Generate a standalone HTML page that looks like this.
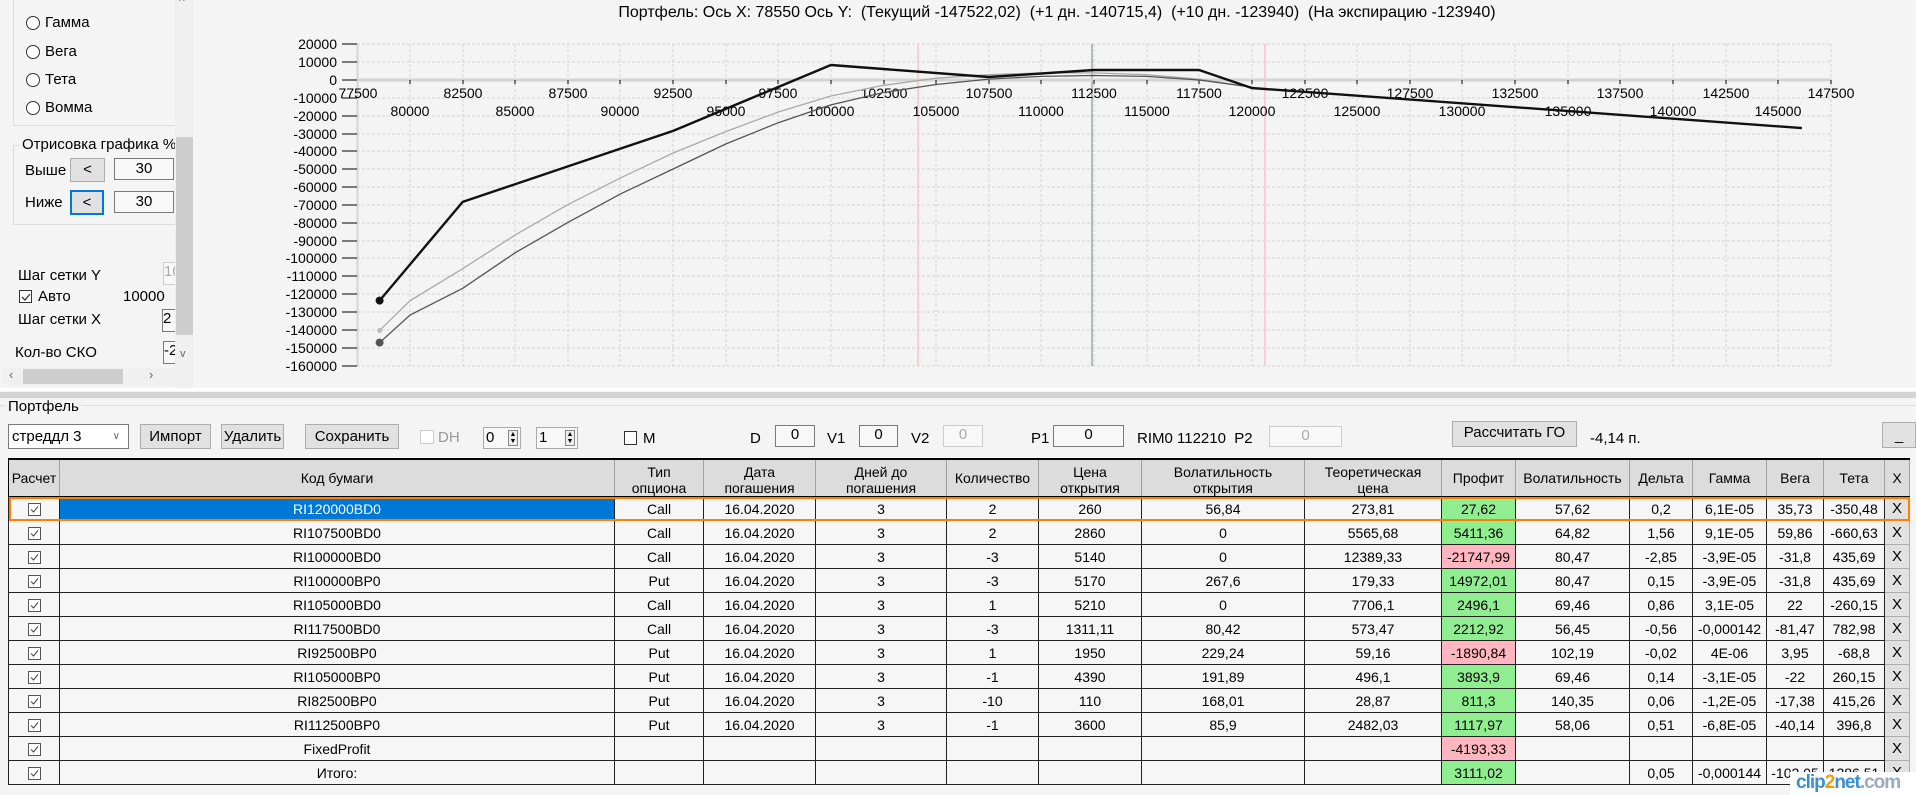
<!DOCTYPE html>
<html><head><meta charset="utf-8"><style>
*{box-sizing:border-box;margin:0;padding:0}
body{width:1916px;height:795px;overflow:hidden;background:#f4f4f4;font-family:"Liberation Sans",sans-serif;color:#000;position:relative}
.a{position:absolute;white-space:nowrap}
.l{font-size:15px;line-height:18px}
.btn{position:absolute;background:#e1e1e1;border:1px solid #adadad;font-size:15px;text-align:center}
.tb{position:absolute;background:#f8f8f8;border:1px solid #7a7a7a;font-size:15px;text-align:center}
.rad{position:absolute;width:14px;height:14px;border:1px solid #333;border-radius:50%;background:#fff}
table{position:absolute;left:8px;top:458px;border-collapse:collapse;table-layout:fixed;font-size:14px;border-top:2px solid #000;border-left:1px solid #000}
th{background:#dcdcdc;font-weight:normal;height:36px;border-right:1px solid #a0a0a0;border-bottom:1px solid #000;line-height:16px;overflow:hidden;padding-top:4px;vertical-align:top}
td{height:24px;border:1px solid #222;text-align:center;background:#f6f6f6;overflow:hidden;white-space:nowrap;padding:0}
td.g{background:#90ee90}td.r{background:#ffb6c1}
td.x{background:#e1e1e1;border:1px solid #adadad;font-size:15px}
td.sel{background:#0078d7;color:#fff}
.cb{display:inline-block;width:13px;height:13px;border:1px solid #555;background:#fff;vertical-align:middle;position:relative}
.cb svg{position:absolute;left:0;top:0}
</style></head><body>

<!-- left panel -->
<div class="a" style="left:0;top:0;width:193px;height:388px;background:#f4f4f4"></div>
<div class="a" style="left:13px;top:-5px;width:165px;height:131px;border:1px solid #dcdcdc;border-right:none"></div>
<div class="rad" style="left:26px;top:16px"></div><div class="a l" style="left:45px;top:14px">Гамма</div>
<div class="rad" style="left:26px;top:45px"></div><div class="a l" style="left:45px;top:43px">Вега</div>
<div class="rad" style="left:26px;top:73px"></div><div class="a l" style="left:45px;top:71px">Тета</div>
<div class="rad" style="left:26px;top:101px"></div><div class="a l" style="left:45px;top:99px">Вомма</div>
<div class="a" style="left:13px;top:145px;width:165px;height:80px;border:1px solid #dcdcdc;border-right:none"></div>
<div class="a l" style="left:20px;top:136px;background:#f4f4f4;padding:0 2px">Отрисовка графика %</div>
<div class="a l" style="left:25px;top:162px">Выше</div>
<div class="btn" style="left:70px;top:158px;width:35px;height:24px;line-height:22px">&lt;</div>
<div class="tb" style="left:114px;top:158px;width:60px;height:22px;line-height:20px">30</div>
<div class="a l" style="left:25px;top:194px">Ниже</div>
<div class="btn" style="left:70px;top:190px;width:34px;height:25px;line-height:21px;border:2px solid #0078d7">&lt;</div>
<div class="tb" style="left:114px;top:191px;width:60px;height:22px;line-height:20px">30</div>
<div class="a l" style="left:18px;top:267px">Шаг сетки Y</div>
<div class="tb" style="left:163px;top:262px;width:14px;height:23px;color:#aaa;border-color:#ccc;overflow:hidden;text-align:left">10</div>
<div class="a" style="left:19px;top:290px;width:13px;height:13px;border:1px solid #333;background:#fff"><svg width="13" height="13"><path d="M2 6 L5 9 L10 3" stroke="#333" stroke-width="1.3" fill="none"/></svg></div>
<div class="a l" style="left:38px;top:288px">Авто</div>
<div class="a l" style="left:123px;top:288px">10000</div>
<div class="a l" style="left:18px;top:311px">Шаг сетки X</div>
<div class="tb" style="left:162px;top:309px;width:15px;height:23px;overflow:hidden;text-align:left">2</div>
<div class="a l" style="left:15px;top:344px">Кол-во СКО</div>
<div class="tb" style="left:163px;top:341px;width:14px;height:23px;overflow:hidden;text-align:left">-2</div>
<div class="a" style="left:175px;top:0;width:18px;height:388px;background:#f0f0f0"></div>
<div class="a" style="left:176px;top:137px;width:17px;height:198px;background:#cdcdcd"></div>
<div class="a" style="left:179px;top:-6px;font-size:12px;color:#666">^</div>
<div class="a" style="left:180px;top:348px;font-size:11px;color:#666">v</div>
<div class="a" style="left:3px;top:368px;width:172px;height:17px;background:#f0f0f0"></div>
<div class="a" style="left:23px;top:369px;width:100px;height:15px;background:#cdcdcd"></div>
<div class="a" style="left:9px;top:367px;font-size:13px;color:#666">‹</div>
<div class="a" style="left:149px;top:367px;font-size:13px;color:#666">›</div>

<!-- chart -->
<div class="a" style="left:614px;top:3px;width:886px;text-align:center;font-size:16px;line-height:20px">Портфель: Ось X: 78550 Ось Y:&nbsp; (Текущий -147522,02)&nbsp; (+1 дн. -140715,4)&nbsp; (+10 дн. -123940)&nbsp; (На экспирацию -123940)</div>
<svg class="a" style="left:0;top:0" width="1916" height="388">
<g stroke="#d3d3d3" stroke-dasharray="3,2" stroke-width="1">
<path d="M357 44H1831M357 62H1831M357 98H1831M357 116H1831M357 134H1831M357 151H1831M357 169H1831M357 187H1831M357 205H1831M357 223H1831M357 241H1831M357 258H1831M357 276H1831M357 294H1831M357 312H1831M357 330H1831M357 348H1831M357 366H1831"/>
<path d="M410 44V366M463 44V366M515 44V366M568 44V366M620 44V366M673 44V366M726 44V366M778 44V366M831 44V366M884 44V366M936 44V366M989 44V366M1041 44V366M1094 44V366M1147 44V366M1199 44V366M1252 44V366M1305 44V366M1357 44V366M1410 44V366M1462 44V366M1515 44V366M1568 44V366M1620 44V366M1673 44V366M1726 44V366M1778 44V366M1831 44V366"/>
</g>
<path d="M918 44V366M1265 44V366" stroke="#ffc0cb" stroke-width="1.5"/>
<path d="M1092 44V366" stroke="#8890a0" stroke-width="1.2"/>
<path d="M357 80H1831" stroke="#d4d4d4" stroke-width="3"/>
<path d="M357.5 44V366" stroke="#d4d4d4" stroke-width="2"/>
<g stroke="#000" stroke-width="1"><path d="M342 44H357M342 62H357M342 80H357M342 98H357M342 116H357M342 134H357M342 151H357M342 169H357M342 187H357M342 205H357M342 223H357M342 241H357M342 258H357M342 276H357M342 294H357M342 312H357M342 330H357M342 348H357M342 366H357"/>
<path d="M410 80v4M463 80v4M515 80v4M568 80v4M620 80v4M673 80v4M726 80v4M778 80v4M831 80v4M884 80v4M936 80v4M989 80v4M1041 80v4M1094 80v4M1147 80v4M1199 80v4M1252 80v4M1305 80v4M1357 80v4M1410 80v4M1462 80v4M1515 80v4M1568 80v4M1620 80v4M1673 80v4M1726 80v4M1778 80v4M1831 80v4"/></g>
<g font-family="Liberation Sans" font-size="14" text-anchor="end">
<text x="337" y="49">20000</text><text x="337" y="67">10000</text><text x="337" y="85">0</text><text x="337" y="103">-10000</text><text x="337" y="121">-20000</text><text x="337" y="139">-30000</text><text x="337" y="156">-40000</text><text x="337" y="174">-50000</text><text x="337" y="192">-60000</text><text x="337" y="210">-70000</text><text x="337" y="228">-80000</text><text x="337" y="246">-90000</text><text x="337" y="263">-100000</text><text x="337" y="281">-110000</text><text x="337" y="299">-120000</text><text x="337" y="317">-130000</text><text x="337" y="335">-140000</text><text x="337" y="353">-150000</text><text x="337" y="371">-160000</text>
</g>
<g font-family="Liberation Sans" font-size="14" text-anchor="middle">
<text x="358" y="98">77500</text><text x="463" y="98">82500</text><text x="568" y="98">87500</text><text x="673" y="98">92500</text><text x="778" y="98">97500</text><text x="884" y="98">102500</text><text x="989" y="98">107500</text><text x="1094" y="98">112500</text><text x="1199" y="98">117500</text><text x="1305" y="98">122500</text><text x="1410" y="98">127500</text><text x="1515" y="98">132500</text><text x="1620" y="98">137500</text><text x="1726" y="98">142500</text><text x="1831" y="98">147500</text>
<text x="410" y="116">80000</text><text x="515" y="116">85000</text><text x="620" y="116">90000</text><text x="726" y="116">95000</text><text x="831" y="116">100000</text><text x="936" y="116">105000</text><text x="1041" y="116">110000</text><text x="1147" y="116">115000</text><text x="1252" y="116">120000</text><text x="1357" y="116">125000</text><text x="1462" y="116">130000</text><text x="1568" y="116">135000</text><text x="1673" y="116">140000</text><text x="1778" y="116">145000</text>
</g>
<polyline fill="none" stroke="#aaa" stroke-width="1.3" points="379.6,330.5 410.1,300.7 462.7,268.7 515.3,234.9 567.9,204.6 620.5,177.9 673.1,153 725.7,131.6 778.3,112 830.9,96 883.5,85.3 936.1,78.2 988.7,74.7 1041.3,72.9 1093.9,72.9 1146.5,74.7 1199.1,79.1 1251.7,87.1"/>
<polyline fill="none" stroke="#555" stroke-width="1.3" points="379.6,342.6 410.1,315 462.7,288.3 515.3,252.7 567.9,222.4 620.5,193.9 673.1,169 725.7,144 778.3,122.7 830.9,104.9 883.5,92.5 936.1,84.5 988.7,79.1 1041.3,76.4 1093.9,75.5 1146.5,76.4 1199.1,80 1251.7,87.1"/>
<polyline fill="none" stroke="#111" stroke-width="2.4" stroke-linejoin="round" points="379.6,300.6 462.7,201.9 673.1,130.9 830.9,65 988.7,77 1093.9,70 1199.1,70 1251.7,88 1801.9,128.1"/>
<circle cx="379.6" cy="300.6" r="4" fill="#111"/>
<circle cx="379.6" cy="342.6" r="4" fill="#555"/>
<circle cx="379.6" cy="330.5" r="2.5" fill="#bbb"/>
</svg>

<!-- splitter -->
<div class="a" style="left:0;top:388px;width:1916px;height:3px;background:#fff"></div>
<div class="a" style="left:0;top:392px;width:1916px;height:6px;background:#d3d3d3"></div>
<div class="a" style="left:0;top:405px;width:1916px;height:1px;background:#dcdcdc"></div>
<div class="a l" style="left:6px;top:398px;background:#f4f4f4;padding:0 2px">Портфель</div>

<!-- toolbar -->
<div class="a" style="left:8px;top:424px;width:121px;height:25px;background:#fff;border:1px solid #7a7a7a;font-size:15px;line-height:23px;padding-left:3px">стреддл 3<span style="position:absolute;right:8px;font-size:10px;color:#666">∨</span></div>
<div class="btn" style="left:140px;top:424px;width:71px;height:25px;line-height:23px">Импорт</div>
<div class="btn" style="left:221px;top:424px;width:63px;height:25px;line-height:23px">Удалить</div>
<div class="btn" style="left:305px;top:424px;width:94px;height:25px;line-height:23px">Сохранить</div>
<div class="a" style="left:420px;top:430px;width:14px;height:14px;border:1px solid #ccc;background:#fff"></div>
<div class="a l" style="left:438px;top:429px;color:#999">DH</div>
<div class="a" style="left:483px;top:427px;width:38px;height:22px;border:1px solid #aaa;background:#f8f8f8;font-size:15px;line-height:20px;padding-left:2px">0<span style="position:absolute;right:2px;top:2px;width:10px;height:16px;border:1px solid #888;font-size:7px;line-height:7px;text-align:center;background:#eee">▲<br>▼</span></div>
<div class="a" style="left:536px;top:427px;width:42px;height:22px;border:1px solid #aaa;background:#f8f8f8;font-size:15px;line-height:20px;padding-left:2px">1<span style="position:absolute;right:2px;top:2px;width:10px;height:16px;border:1px solid #888;font-size:7px;line-height:7px;text-align:center;background:#eee">▲<br>▼</span></div>
<div class="a" style="left:624px;top:431px;width:13px;height:14px;border:1px solid #333;background:#fff"></div>
<div class="a l" style="left:643px;top:430px">M</div>
<div class="a l" style="left:750px;top:430px">D</div>
<div class="tb" style="left:775px;top:425px;width:40px;height:22px;line-height:18px">0</div>
<div class="a l" style="left:827px;top:430px">V1</div>
<div class="tb" style="left:859px;top:425px;width:39px;height:22px;line-height:18px">0</div>
<div class="a l" style="left:911px;top:430px">V2</div>
<div class="tb" style="left:943px;top:425px;width:40px;height:22px;line-height:18px;color:#aaa;border-color:#ccc">0</div>
<div class="a l" style="left:1031px;top:430px">P1</div>
<div class="tb" style="left:1053px;top:425px;width:71px;height:22px;line-height:18px">0</div>
<div class="a l" style="left:1137px;top:430px">RIM0 112210&nbsp; P2</div>
<div class="tb" style="left:1269px;top:426px;width:73px;height:21px;line-height:18px;color:#aaa;border-color:#ccc">0</div>
<div class="btn" style="left:1452px;top:421px;width:125px;height:26px;line-height:22px">Рассчитать ГО</div>
<div class="a l" style="left:1590px;top:430px">-4,14 п.</div>
<div class="btn" style="left:1882px;top:422px;width:34px;height:26px;line-height:26px">_</div>

<!-- table -->
<table>
<colgroup><col style="width:51px"><col style="width:555px"><col style="width:89px"><col style="width:112px"><col style="width:131px"><col style="width:92px"><col style="width:103px"><col style="width:163px"><col style="width:137px"><col style="width:74px"><col style="width:114px"><col style="width:63px"><col style="width:74px"><col style="width:57px"><col style="width:61px"><col style="width:25px"></colgroup>
<tr><th style="padding-top:10px">Расчет</th><th style="padding-top:10px">Код бумаги</th><th>Тип<br>опциона</th><th>Дата<br>погашения</th><th>Дней до<br>погашения</th><th style="padding-top:10px">Количество</th><th>Цена<br>открытия</th><th>Волатильность<br>открытия</th><th>Теоретическая<br>цена</th><th style="padding-top:10px">Профит</th><th style="padding-top:10px">Волатильность</th><th style="padding-top:10px">Дельта</th><th style="padding-top:10px">Гамма</th><th style="padding-top:10px">Вега</th><th style="padding-top:10px">Тета</th><th style="padding-top:10px">X</th></tr>
<tr style="outline:2px solid #ff8000;outline-offset:-2px"><td><span class="cb"><svg width="11" height="11"><path d="M2 5.5L4.5 8L9 2.5" stroke="#444" fill="none"/></svg></span></td><td class="sel">RI120000BD0</td><td>Call</td><td>16.04.2020</td><td>3</td><td>2</td><td>260</td><td>56,84</td><td>273,81</td><td class="g">27,62</td><td>57,62</td><td>0,2</td><td>6,1E-05</td><td>35,73</td><td>-350,48</td><td class="x">X</td></tr>
<tr><td><span class="cb"><svg width="11" height="11"><path d="M2 5.5L4.5 8L9 2.5" stroke="#444" fill="none"/></svg></span></td><td>RI107500BD0</td><td>Call</td><td>16.04.2020</td><td>3</td><td>2</td><td>2860</td><td>0</td><td>5565,68</td><td class="g">5411,36</td><td>64,82</td><td>1,56</td><td>9,1E-05</td><td>59,86</td><td>-660,63</td><td class="x">X</td></tr>
<tr><td><span class="cb"><svg width="11" height="11"><path d="M2 5.5L4.5 8L9 2.5" stroke="#444" fill="none"/></svg></span></td><td>RI100000BD0</td><td>Call</td><td>16.04.2020</td><td>3</td><td>-3</td><td>5140</td><td>0</td><td>12389,33</td><td class="r">-21747,99</td><td>80,47</td><td>-2,85</td><td>-3,9E-05</td><td>-31,8</td><td>435,69</td><td class="x">X</td></tr>
<tr><td><span class="cb"><svg width="11" height="11"><path d="M2 5.5L4.5 8L9 2.5" stroke="#444" fill="none"/></svg></span></td><td>RI100000BP0</td><td>Put</td><td>16.04.2020</td><td>3</td><td>-3</td><td>5170</td><td>267,6</td><td>179,33</td><td class="g">14972,01</td><td>80,47</td><td>0,15</td><td>-3,9E-05</td><td>-31,8</td><td>435,69</td><td class="x">X</td></tr>
<tr><td><span class="cb"><svg width="11" height="11"><path d="M2 5.5L4.5 8L9 2.5" stroke="#444" fill="none"/></svg></span></td><td>RI105000BD0</td><td>Call</td><td>16.04.2020</td><td>3</td><td>1</td><td>5210</td><td>0</td><td>7706,1</td><td class="g">2496,1</td><td>69,46</td><td>0,86</td><td>3,1E-05</td><td>22</td><td>-260,15</td><td class="x">X</td></tr>
<tr><td><span class="cb"><svg width="11" height="11"><path d="M2 5.5L4.5 8L9 2.5" stroke="#444" fill="none"/></svg></span></td><td>RI117500BD0</td><td>Call</td><td>16.04.2020</td><td>3</td><td>-3</td><td>1311,11</td><td>80,42</td><td>573,47</td><td class="g">2212,92</td><td>56,45</td><td>-0,56</td><td>-0,000142</td><td>-81,47</td><td>782,98</td><td class="x">X</td></tr>
<tr><td><span class="cb"><svg width="11" height="11"><path d="M2 5.5L4.5 8L9 2.5" stroke="#444" fill="none"/></svg></span></td><td>RI92500BP0</td><td>Put</td><td>16.04.2020</td><td>3</td><td>1</td><td>1950</td><td>229,24</td><td>59,16</td><td class="r">-1890,84</td><td>102,19</td><td>-0,02</td><td>4E-06</td><td>3,95</td><td>-68,8</td><td class="x">X</td></tr>
<tr><td><span class="cb"><svg width="11" height="11"><path d="M2 5.5L4.5 8L9 2.5" stroke="#444" fill="none"/></svg></span></td><td>RI105000BP0</td><td>Put</td><td>16.04.2020</td><td>3</td><td>-1</td><td>4390</td><td>191,89</td><td>496,1</td><td class="g">3893,9</td><td>69,46</td><td>0,14</td><td>-3,1E-05</td><td>-22</td><td>260,15</td><td class="x">X</td></tr>
<tr><td><span class="cb"><svg width="11" height="11"><path d="M2 5.5L4.5 8L9 2.5" stroke="#444" fill="none"/></svg></span></td><td>RI82500BP0</td><td>Put</td><td>16.04.2020</td><td>3</td><td>-10</td><td>110</td><td>168,01</td><td>28,87</td><td class="g">811,3</td><td>140,35</td><td>0,06</td><td>-1,2E-05</td><td>-17,38</td><td>415,26</td><td class="x">X</td></tr>
<tr><td><span class="cb"><svg width="11" height="11"><path d="M2 5.5L4.5 8L9 2.5" stroke="#444" fill="none"/></svg></span></td><td>RI112500BP0</td><td>Put</td><td>16.04.2020</td><td>3</td><td>-1</td><td>3600</td><td>85,9</td><td>2482,03</td><td class="g">1117,97</td><td>58,06</td><td>0,51</td><td>-6,8E-05</td><td>-40,14</td><td>396,8</td><td class="x">X</td></tr>
<tr><td><span class="cb"><svg width="11" height="11"><path d="M2 5.5L4.5 8L9 2.5" stroke="#444" fill="none"/></svg></span></td><td>FixedProfit</td><td></td><td></td><td></td><td></td><td></td><td></td><td></td><td class="r">-4193,33</td><td></td><td></td><td></td><td></td><td></td><td class="x">X</td></tr>
<tr><td><span class="cb"><svg width="11" height="11"><path d="M2 5.5L4.5 8L9 2.5" stroke="#444" fill="none"/></svg></span></td><td>Итого:</td><td></td><td></td><td></td><td></td><td></td><td></td><td></td><td class="g">3111,02</td><td></td><td>0,05</td><td>-0,000144</td><td>-102,05</td><td>1286,51</td><td class="x">X</td></tr>
</table>

<!-- watermark -->
<div class="a" style="left:1790px;top:772px;width:126px;height:23px;background:#fff"></div>
<div class="a" style="left:1796px;top:772px;font-size:19px;line-height:22px;color:#3a8fd0;font-weight:bold;letter-spacing:-1px">clip<span style="color:#f39c12">2</span>net<span style="color:#9ab">.com</span></div>
</body></html>
